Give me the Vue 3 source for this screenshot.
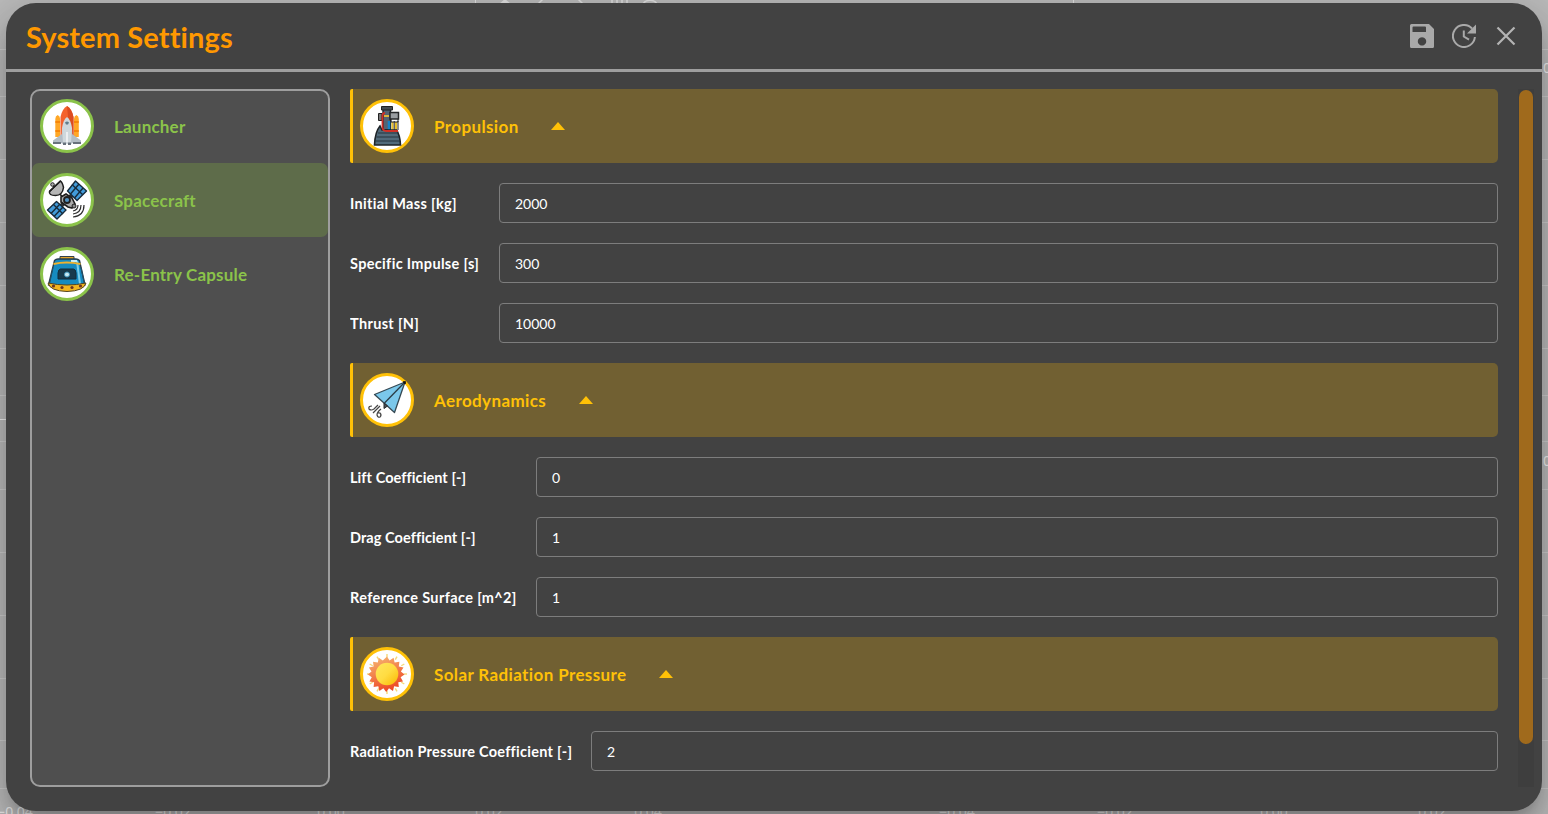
<script setup>
import { ref } from 'vue'

const systems = [
  { id: 'launcher', name: 'Launcher' },
  { id: 'spacecraft', name: 'Spacecraft' },
  { id: 'capsule', name: 'Re-Entry Capsule' },
]
const selected = ref('spacecraft')

const sections = ref([
  {
    id: 'propulsion',
    name: 'Propulsion',
    fields: [
      { label: 'Initial Mass [kg]', value: '2000' },
      { label: 'Specific Impulse [s]', value: '300' },
      { label: 'Thrust [N]', value: '10000' },
    ],
  },
  {
    id: 'aerodynamics',
    name: 'Aerodynamics',
    fields: [
      { label: 'Lift Coefficient [-]', value: '0' },
      { label: 'Drag Coefficient [-]', value: '1' },
      { label: 'Reference Surface [m^2]', value: '1' },
    ],
  },
  {
    id: 'solar',
    name: 'Solar Radiation Pressure',
    fields: [{ label: 'Radiation Pressure Coefficient [-]', value: '2' }],
  },
])

const gridLines = [49, 96, 159, 222, 285, 348, 395, 441, 489, 552, 615, 678, 740, 788]
const ticks = [
  { x: 15, text: '−0.04' },
  { x: 173, text: '−0.02' },
  { x: 331, text: '0.00' },
  { x: 489, text: '0.02' },
  { x: 648, text: '0.04' },
  { x: 957, text: '−0.04' },
  { x: 1115, text: '−0.02' },
  { x: 1274, text: '0.00' },
  { x: 1432, text: '0.02' },
]
const rays = Array.from({ length: 12 }, (_, i) => i * 30)
const flames = Array.from({ length: 16 }, (_, i) => i * 22.5)
</script>

<template>
  <div class="screen">
    <svg class="plot" width="1548" height="814">
      <path v-for="y in gridLines" :key="y" :d="`M0 ${y}.5H1548`" stroke="#cbcbcb" />
      <path d="M0 419.5H8" stroke="#eee" />
      <path d="M475.5 0V4M1073.5 0V4" stroke="#dedede" />
      <path d="M499 4l6-5 6 5z" fill="#dedede" />
      <path d="M612 0v4M617 0v4M622 0v4M627 0v4M538 4l5-5M578-1l5 5M643 4c3-5 11-5 14 0" stroke="#dedede" stroke-width="1.5" fill="none" />
      <text v-for="t in ticks" :key="t.x" :x="t.x" y="817" text-anchor="middle">{{ t.text }}</text>
      <text x="1547" y="73" text-anchor="middle">0</text>
      <text x="1547" y="466" text-anchor="middle">0</text>
    </svg>

    <section class="dialog">
      <header class="title-bar">
        <h1>System Settings</h1>
        <div class="actions">
          <svg viewBox="0 0 24 24"><path fill="#a9a9a9" fill-rule="evenodd" d="M1.500 0H19L24 5V22.500Q24 24 22.500 24H1.500Q0 24 0 22.500V1.500Q0 0 1.500 0zM2.500 3.500V8H16V3.500Q16 2.500 15 2.500H3.500Q2.500 2.500 2.500 3.500zM12 13.200a4.200 4.200 0 1 0 .01 0z" /></svg>
          <svg viewBox="0 0 24 24"><path d="M20 4.500A11 11 0 1 0 22.900 13" fill="none" stroke="#a9a9a9" stroke-width="2" /><path d="M24 .5V9.500H15z" fill="#a9a9a9" /><path d="M11.800 6.500V12.500L17 15.600" fill="none" stroke="#a9a9a9" stroke-width="2" /></svg>
          <svg viewBox="0 0 24 24"><path d="M3.500 3.500L20.500 20.500M20.500 3.500L3.500 20.500" stroke="#b4b4b4" stroke-width="2.200" /></svg>
        </div>
      </header>

      <main class="body">
        <nav class="systems">
          <div v-for="s in systems" :key="s.id" class="system" :class="{ active: s.id === selected }" @click="selected = s.id">
            <span class="badge">
              <svg v-if="s.id === 'launcher'" viewBox="0 0 54 54">
                <path d="M15.300 38V20q0-3 2.400-4 2.400 1 2.400 4v18zM34 38V20q0-3 2.400-4 2.400 1 2.400 4v18z" fill="#ffa726" />
                <path d="M15.300 23h4.800M34 23h4.800M15.300 32h4.800M34 32h4.800" stroke="#f57c00" stroke-width="1.300" />
                <path d="M20.500 38V18Q22 10 27 7q5 3 6.500 11v20z" fill="#f4622d" />
                <path d="M27 7q5 3 6.500 11v20H30z" fill="#dc4c20" />
                <path d="M22 45q-.5-9 0-16 1-8 5-11 4 3 5 11 .5 7 0 16z" fill="#cfd8dc" />
                <path d="M22 29v6L13 41.500V45L23 44zM32 29v6l9 6.500V45L31 44z" fill="#b3bdc5" />
                <path d="M13 43h8v2h-8zM33 43h8v2h-8zM23 43.500h3V46h-3zM28 43.500h3V46h-3z" fill="#68727c" />
                <path d="M25 23.500q2-2 4 0l-1 2h-2z" fill="#607d8b" /><path d="M27 33v10" stroke="#eceff1" stroke-width="2" />
              </svg>
              <svg v-else-if="s.id === 'spacecraft'" viewBox="0 0 54 54">
                <path d="M14 40L38 16" stroke="#333" stroke-width="4" />
                <g stroke="#172b3b" stroke-width="1.400" stroke-linejoin="round" fill="#429bd9">
                  <path d="M35.500 8L46.500 18 37 27.500 27.500 18zM16.500 28.500L26 37 17 46 7.500 37z" />
                  <path d="M39 11l-8.500 10M43 15l-8.500 10M32 11.500l10.500 10M13.500 31.500L23 41M20 31l-9 9.500M23 34l-9 9.500" fill="none" />
                </g>
                <path d="M9.500 18.500q-1 4 6 4 7 0 8-8-1-5-3-6.500z" fill="#b6b6b6" stroke="#202020" stroke-width="1.500" />
                <path d="M9.500 18.500L20.500 8M14 14l-1-3M20 21l3 4" stroke="#202020" stroke-width="1.600" /><circle cx="12.500" cy="11.500" r="1.800" fill="#aaa" stroke="#222" />
                <path d="M21 24l5-3 6 4 3 6-3 4-4-1-7-5z" fill="#aaa" stroke="#202020" stroke-width="1.600" /><circle cx="27" cy="27" r="3" fill="#4f91c1" stroke="#202020" stroke-width="1.800" />
                <circle cx="34" cy="33" r="2" fill="#8a8a8a" stroke="#202020" /><path d="M38 32q0 5-5 6M41 32q0 8-8 9M44 32q0 11-11 12" fill="none" stroke="#303030" stroke-width="1.200" />
              </svg>
              <svg v-else viewBox="0 0 54 54">
                <path d="M20 9.500h14V13H20z" fill="#e3a52c" stroke="#33404b" />
                <path d="M14.500 13.500Q16 12 18 12h18q2 0 3.500 1.500L45 38Q27 48 8.500 38z" fill="#168bc0" stroke="#293c49" stroke-width="1.400" />
                <path d="M37 14l3 23" stroke="#79cdea" stroke-width="2" /><path d="M31 14h6" stroke="#c5edf8" stroke-width="2" />
                <path d="M13.500 17q13-3 27 0" fill="none" stroke="#edb22f" stroke-width="2" />
                <path d="M13 20.500L9.500 37M41 20.500L44.500 37" stroke="#20516a" /><path d="M8 36q19 4 38 0-2 8-19 8.500Q10 44 8 36z" fill="#f2b51f" stroke="#524522" />
                <path d="M20.500 22h13q2 0 2.500 4v6H18v-6q.5-4 2.500-4z" fill="#183a4c" stroke="#102d3c" /><circle cx="27" cy="27.500" r="2.500" fill="#c5e9f3" stroke="#3c93ba" />
                <g fill="#6c3523"><circle cx="13.500" cy="39" r="1.600" /><circle cx="22" cy="40.500" r="1.600" /><circle cx="32" cy="40.500" r="1.600" /><circle cx="40.500" cy="39" r="1.600" /></g>
              </svg>
            </span>
            <span class="name">{{ s.name }}</span>
          </div>
        </nav>

        <div class="sections">
          <section v-for="s in sections" :key="s.id" class="section" :class="s.id">
            <div class="section-head">
              <span class="badge gold">
                <svg v-if="s.id === 'propulsion'" viewBox="0 0 54 54">
                  <path d="M18.500 14.500H22v7h-3.500z" fill="#777" stroke="#222" /><path d="M23 10h7.500v21H23z" fill="#536473" stroke="#20262b" stroke-width="1.400" />
                  <path d="M21.500 7.500h11V11h-11z" fill="#424a50" stroke="#1f2225" /><path d="M30 13.500h8.500V20H30z" fill="#999da1" stroke="#26282a" stroke-width="1.500" />
                  <path d="M24 17h5" stroke="#ddb53e" stroke-width="2" /><path d="M29 22v9" stroke="#1683c7" stroke-width="2.500" /><path d="M32.500 23v8M36 23v8" stroke="#e9bf2b" stroke-width="2" /><path d="M31 20v3h7v-3M34.200 22v9M38 22v9" fill="none" stroke="#222" />
                  <path d="M20 27q-5 6-5.500 19h26Q40 36 36.500 31H22z" fill="#526b7b" stroke="#1e2428" stroke-width="1.600" />
                  <path d="M18 34h20M16.500 38h22.500M15.500 42h24.500" stroke="#26353e" stroke-width="1.200" />
                  <path d="M25 14q-2.500 0-2.500 3v11q0 4 4 4H38" fill="none" stroke="#cf3026" stroke-width="1.800" />
                </svg>
                <svg v-else-if="s.id === 'aerodynamics'" viewBox="0 0 54 54">
                  <path d="M45 9L14.500 21.500 24 30l10.500 9.500z" fill="#7bc8eb" stroke="#354954" stroke-width="1.300" stroke-linejoin="round" />
                  <path d="M24 30v5.500l3.500-2.500z" fill="#4b5154" stroke="#262b2e" /><path d="M45 9L24.500 30" stroke="#2b3c46" stroke-width="1.300" /><path d="M43 9h2v2" stroke="#111" stroke-width="1.600" fill="none" />
                  <path d="M12 33q-4 0-3 3 2 2 5 0l4-4M13 40l7-7M21 36q-4 3-4 6 1 3 3 2 2-2 0-4-2 0-2-1" fill="none" stroke="#444" stroke-width="1.200" />
                </svg>
                <svg v-else viewBox="0 0 54 54">
                  <defs>
                    <linearGradient id="flare" gradientUnits="userSpaceOnUse" x1="20" y1="10" x2="32" y2="44"><stop stop-color="#f6b06c" /><stop offset="1" stop-color="#ec4322" /></linearGradient>
                    <linearGradient id="disc" x1="0" y1="0" x2="1" y2="1"><stop stop-color="#ffe75e" /><stop offset=".5" stop-color="#ffdc42" /><stop offset="1" stop-color="#f9b800" /></linearGradient>
                  </defs>
                  <path v-for="a in rays" :key="'r' + a" d="M27 7v3.500" :transform="`rotate(${a} 27 27)`" stroke="#f5d878" stroke-width="1.400" />
                  <path
                    d="M27 9.500l2.600 4 4-2.700 1 4.700 4.800-.7-.6 4.800 4.700 1-2.600 4 3.600 2.900-3.900 2.800 2.400 4.100-4.700.8.5 4.800-4.700-.7-1.100 4.700-4-2.700-2.800 3.700-2.800-3.700-4 2.700-1.100-4.700-4.700.7.5-4.800-4.700-.8 2.400-4.100-3.900-2.800 3.600-2.900-2.600-4 4.700-1-.6-4.800 4.800.7 1-4.700 4 2.700z"
                    fill="url(#flare)"
                  />
                  <circle cx="27" cy="27" r="11.300" fill="url(#disc)" />
                </svg>
              </span>
              <span class="name">{{ s.name }}</span>
              <i class="caret"></i>
            </div>
            <div class="fields">
              <template v-for="f in s.fields" :key="f.label">
                <label>{{ f.label }}</label>
                <input v-model="f.value" :aria-label="f.label" />
              </template>
            </div>
          </section>
        </div>
        <div class="track"><div class="thumb"></div></div>
      </main>
    </section>
  </div>
</template>

<style>
html, body { margin: 0; overflow: hidden; }
</style>

<style scoped>
* { box-sizing: border-box; }
.screen { position: relative; width: 1548px; height: 814px; padding: 3px 6px; overflow: hidden; background: #bababa; font-family: Lato, Carlito, sans-serif; }
.plot { position: absolute; left: 0; top: 0; font: 14px "Open Sans", sans-serif; fill: #f0f0f0; }
.dialog { position: relative; height: 808px; border-radius: 30px; overflow: hidden; background: #424242; box-shadow: 0 11px 15px -7px rgba(0, 0, 0, .2), 0 24px 38px 3px rgba(0, 0, 0, .14), 0 9px 46px 8px rgba(0, 0, 0, .12); }
.title-bar { height: 69px; padding: 0 24px 0 20px; display: flex; align-items: center; justify-content: space-between; border-bottom: 3px solid #9e9e9e; }
h1 { margin: 0; color: #ff9800; font-size: 29px; font-weight: 700; letter-spacing: .13px; white-space: nowrap; }
.actions { display: flex; gap: 18px; }
.actions svg { width: 24px; height: 24px; }
.body { display: flex; padding: 17px 8px 24px 24px; height: 739px; }
.systems { width: 300px; height: 697.5px; border: 2px solid #9e9e9e; border-radius: 10px; background: #4f4f4f; }
.system { height: 74px; display: flex; align-items: center; gap: 20px; padding-left: 8px; border-radius: 7px; color: #8bc34a; letter-spacing: .2px; }
.system:first-child { margin-top: -2px; }
.system.active { background: #5e6c4a; }
.badge { flex: none; width: 54px; height: 54px; border-radius: 50%; border: 3px solid #8bc34a; background: #fff; display: flex; align-items: center; justify-content: center; }
.badge svg { flex: none; width: 54px; height: 54px; }
.badge.gold { border-color: #ffc107; }
.name { font-size: 17px; font-weight: 700; white-space: nowrap; }
.sections { width: 1148px; margin-left: 20px; height: 698px; overflow: hidden; }
.section-head { height: 74px; display: flex; align-items: center; padding-left: 7px; border-left: 3px solid #ffc107; border-radius: 2px 5px 5px 2px; background: #716032; color: #ffc107; letter-spacing: .38px; }
.section-head .name { margin-left: 20px; }
.caret { margin-left: 32.5px; border: 7.5px solid transparent; border-top: 0; border-bottom: 8px solid #ffc107; }
.fields { display: grid; grid-template-columns: 129px 1fr; gap: 20px; padding: 20px 0; }
.aerodynamics .fields { grid-template-columns: 166px 1fr; }
.solar .fields { grid-template-columns: 221px 1fr; }
label { display: flex; align-items: center; color: #fff; font-size: 14.5px; font-weight: 700; letter-spacing: .33px; white-space: nowrap; }
.aerodynamics label { letter-spacing: .07px; }
.aerodynamics label:last-of-type { letter-spacing: .37px; }
.solar label { letter-spacing: .26px; }
input { min-width: 0; width: 100%; height: 40px; padding: 0 15px; border: 1px solid #7d7d7d; border-radius: 4px; outline: 0; background: transparent; color: #fff; font: 14px Lato, Carlito, sans-serif; }
.track { width: 16px; height: 698px; margin-left: 20px; padding: 1px; background: #3e3e3e; }
.thumb { height: 654px; border-radius: 7px; background: #a06a1c; }
</style>
